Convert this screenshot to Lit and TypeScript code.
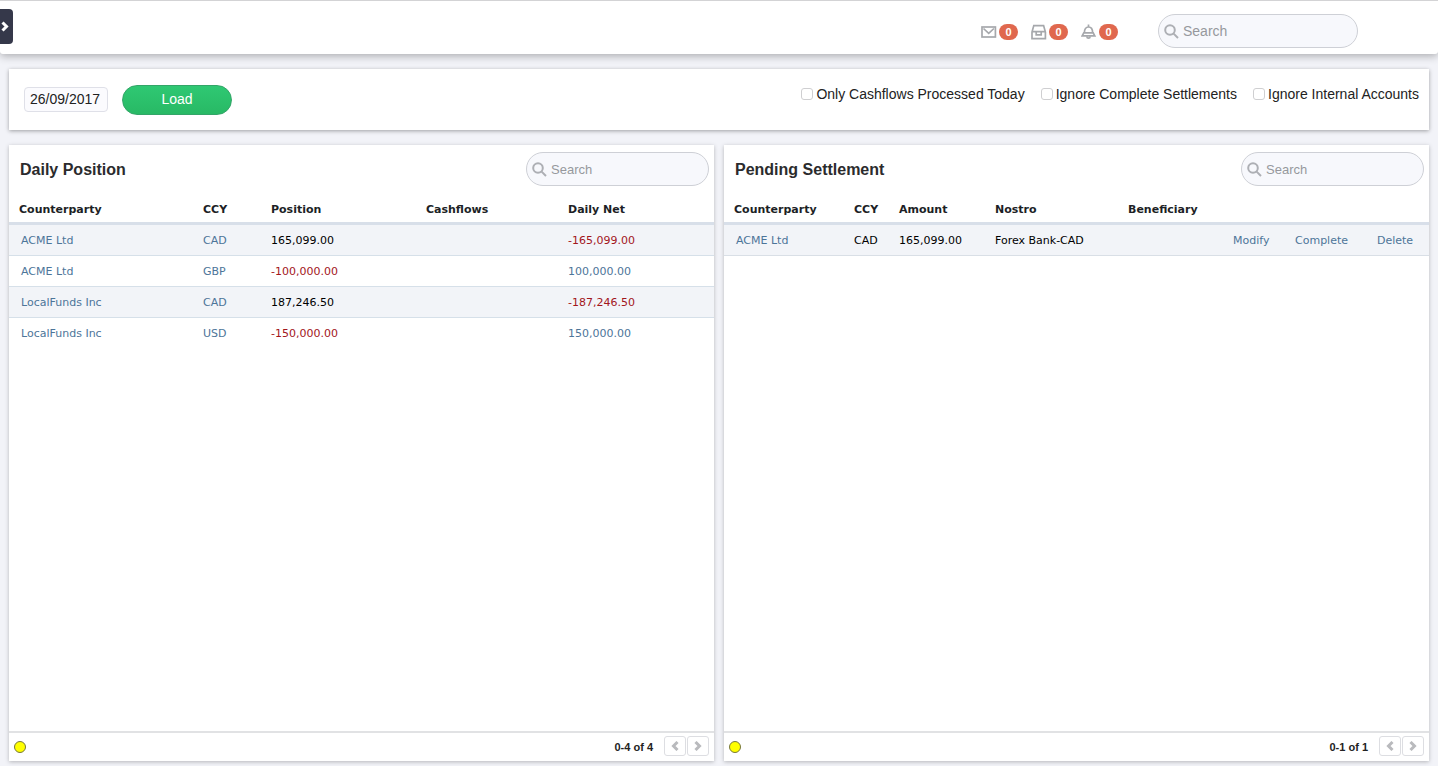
import { LitElement, html, css, svg, nothing } from "lit";
import { customElement, property } from "lit/decorators.js";
import { classMap } from "lit/directives/class-map.js";

interface Cell {
  text: string;
  link?: boolean;
  negative?: boolean;
}

interface Column {
  label: string;
  width: number;
}

const link = (text: string): Cell => ({ text, link: true });
const plain = (text: string): Cell => ({ text });
const negative = (text: string): Cell => ({ text, negative: true });

const positionColumns: Column[] = [
  { label: "Counterparty", width: 184 },
  { label: "CCY", width: 68 },
  { label: "Position", width: 155 },
  { label: "Cashflows", width: 142 },
  { label: "Daily Net", width: 156 },
];

const positionRows: Cell[][] = [
  [link("ACME Ltd"), link("CAD"), plain("165,099.00"), plain(""), negative("-165,099.00")],
  [link("ACME Ltd"), link("GBP"), negative("-100,000.00"), plain(""), link("100,000.00")],
  [link("LocalFunds Inc"), link("CAD"), plain("187,246.50"), plain(""), negative("-187,246.50")],
  [link("LocalFunds Inc"), link("USD"), negative("-150,000.00"), plain(""), link("150,000.00")],
];

const settlementColumns: Column[] = [
  { label: "Counterparty", width: 120 },
  { label: "CCY", width: 45 },
  { label: "Amount", width: 96 },
  { label: "Nostro", width: 133 },
  { label: "Beneficiary", width: 105 },
  { label: "", width: 62 },
  { label: "", width: 82 },
  { label: "", width: 62 },
];

const settlementRows: Cell[][] = [
  [
    link("ACME Ltd"),
    plain("CAD"),
    plain("165,099.00"),
    plain("Forex Bank-CAD"),
    plain(""),
    link("Modify"),
    link("Complete"),
    link("Delete"),
  ],
];

const mailIcon = svg`
  <rect x="1" y="3" width="13.4" height="10" />
  <path d="M2.5 4.5L7.7 9.4L12.9 4.5" />`;

const trayIcon = svg`
  <path d="M1 8V14.6H14.4V8L12.6 1.6H2.8L1 8Z" />
  <path d="M1 7.6H14.4M5.2 8V10.8H10.2V8" />`;

const bellIcon = svg`
  <path d="M7.5 0.6V3M3.4 8.6C3.4 5 5 3 7.5 3S11.6 5 11.6 8.6" />
  <path d="M2.8 8.8H12.2L13.8 11.9H1.2Z" />
  <path d="M5.8 12.4C6 14.8 9 14.8 9.2 12.4" />`;

@customElement("search-box")
class SearchBox extends LitElement {
  @property() label = "Search";

  static styles = css`
    :host {
      display: block;
    }
    .box {
      display: flex;
      align-items: center;
      gap: 4px;
      box-sizing: border-box;
      height: 34px;
      padding: 0 12px 0 5px;
      border: 1px solid #ced0d6;
      border-radius: 17px;
      background: #f7f8fc;
    }
    .glass {
      flex: none;
      width: 15px;
      height: 15px;
      fill: none;
      stroke: #adafb4;
      stroke-width: 2;
    }
    .field {
      flex: 1;
      min-width: 0;
      padding: 0;
      border: 0;
      outline: 0;
      background: none;
      font: inherit;
      color: #333;
    }
    .field::placeholder {
      color: #96989d;
      opacity: 1;
    }
  `;

  render() {
    return html`
      <label class="box">
        <svg class="glass" viewBox="0 0 15 15" aria-hidden="true">
          <circle cx="6" cy="6" r="4.8" />
          <path d="M9.6 9.6L14 14" />
        </svg>
        <input class="field" type="text" placeholder="Search" aria-label=${this.label} />
      </label>
    `;
  }
}

@customElement("data-panel")
class DataPanel extends LitElement {
  @property() heading = "";
  @property() range = "";
  @property({ attribute: false }) columns: Column[] = [];
  @property({ attribute: false }) rows: Cell[][] = [];

  static styles = css`
    :host {
      display: flex;
      flex-direction: column;
      min-width: 0;
      background: #fff;
      box-shadow: 0 1px 4px rgba(0, 0, 0, 0.25);
    }
    .top {
      display: flex;
      align-items: center;
      justify-content: space-between;
      padding: 7px 5px 7px 11px;
    }
    .title {
      margin: 0;
      font-size: 16px;
      line-height: 22px;
      padding-top: 2px;
      font-weight: bold;
      color: #2b2b2d;
    }
    .search {
      width: 183px;
      font-size: 13px;
    }
    .grid {
      width: 100%;
      table-layout: fixed;
      border-spacing: 0;
      font-family: "DejaVu Sans", Verdana, sans-serif;
      font-size: 11px;
      line-height: 14px;
      color: #000;
    }
    th {
      height: 24px;
      padding: 5px 0 0 10px;
      border-bottom: 3px solid #d8dfe9;
      text-align: left;
      white-space: nowrap;
      color: #1d1f26;
    }
    td {
      height: 28px;
      padding: 2px 0 0 10px;
      white-space: nowrap;
      border-bottom: 1px solid #d6e0e9;
    }
    td:first-child {
      padding-left: 12px;
    }
    .odd td {
      background: #f2f4f8;
    }
    .last td {
      border-bottom-color: #fff;
    }
    .odd.last td {
      border-bottom-color: #d9dfe6;
    }
    .negative {
      color: #a3161c;
    }
    .link {
      color: #4d7599;
      text-decoration: none;
    }
    .bottom {
      display: flex;
      align-items: center;
      margin-top: auto;
      height: 28px;
      padding: 0 5px;
      border-top: 2px solid #e1e2e4;
    }
    .status {
      box-sizing: border-box;
      width: 12px;
      height: 12px;
      border: 1px solid #77773c;
      border-radius: 50%;
      background: #ff0;
    }
    .range {
      margin-left: auto;
      padding-right: 10px;
      font-size: 11px;
      font-weight: bold;
      color: #222;
    }
    .page {
      display: flex;
      align-items: center;
      justify-content: center;
      width: 22px;
      height: 20px;
      margin: 0 0 2px 1px;
      padding: 0;
      border: 1px solid #dddee2;
      border-radius: 3px;
      background: #fff;
    }
    .chevron {
      width: 8px;
      height: 10px;
      fill: none;
      stroke: #b9babd;
      stroke-width: 3;
    }
  `;

  private renderCell(cell: Cell) {
    return html`<td class=${cell.negative ? "negative" : nothing}>
      ${cell.link ? html`<a class="link" href="#">${cell.text}</a>` : cell.text}
    </td>`;
  }

  render() {
    return html`
      <div class="top">
        <h2 class="title">${this.heading}</h2>
        <search-box class="search" label=${`Search ${this.heading}`}></search-box>
      </div>
      <table class="grid" aria-label=${this.heading}>
        <colgroup>
          ${this.columns.map((c) => html`<col style="width:${c.width}px" />`)}
        </colgroup>
        <thead>
          <tr>
            ${this.columns.map((c) => html`<th scope="col">${c.label}</th>`)}
          </tr>
        </thead>
        <tbody>
          ${this.rows.map(
            (row, i) => html`<tr
              class=${classMap({ odd: i % 2 === 0, last: i === this.rows.length - 1 })}
            >
              ${row.map((cell) => this.renderCell(cell))}
            </tr>`
          )}
        </tbody>
      </table>
      <div class="bottom">
        <span class="status"></span>
        <span class="range">${this.range}</span>
        <button class="page" type="button" aria-label="Previous page">
          <svg class="chevron" viewBox="0 0 8 10"><path d="M6.5 1L2.5 5L6.5 9" /></svg>
        </button>
        <button class="page" type="button" aria-label="Next page">
          <svg class="chevron" viewBox="0 0 8 10"><path d="M1.5 1L5.5 5L1.5 9" /></svg>
        </button>
      </div>
    `;
  }
}

@customElement("app-root")
class AppRoot extends LitElement {
  static styles = css`
    :host {
      display: flex;
      flex-direction: column;
      box-sizing: border-box;
      min-height: 100vh;
      background: #f2f3f8;
      font-family: "Liberation Sans", Arial, sans-serif;
      font-size: 14px;
      color: #222;
    }
    .header {
      display: flex;
      align-items: center;
      height: 51px;
      padding: 0 80px 2px 0;
      border-top: 1px solid #d3d3d5;
      border-radius: 0 0 3px 3px;
      background: #fff;
      box-shadow: 0 2px 8px rgba(0, 0, 0, 0.3);
    }
    .toggle {
      display: flex;
      align-items: center;
      width: 13px;
      height: 35px;
      padding: 0 0 0 1px;
      border: 0;
      border-radius: 0 4px 4px 0;
      background: #35384a;
    }
    .arrow {
      width: 8px;
      height: 11px;
      fill: none;
      stroke: #fff;
      stroke-width: 3;
    }
    .alerts {
      display: flex;
      gap: 13px;
      margin-left: auto;
      padding-top: 11px;
    }
    .alert {
      display: flex;
      align-items: center;
      gap: 2px;
      height: 16px;
      padding: 0;
      border: 0;
      background: none;
      font: inherit;
    }
    .icon {
      width: 16px;
      height: 16px;
      fill: none;
      stroke: #a6a8ac;
      stroke-width: 1.7;
    }
    .badge {
      width: 19px;
      height: 16px;
      border-radius: 8px;
      background: #e0684e;
      font-size: 11px;
      line-height: 16px;
      font-weight: bold;
      text-align: center;
      color: #fff;
    }
    .search {
      width: 200px;
      margin-left: 40px;
      padding-top: 9px;
    }
    .main {
      flex: 1;
      display: flex;
      flex-direction: column;
      gap: 15px;
      padding: 15px 9px 5px;
    }
    .toolbar {
      display: flex;
      align-items: center;
      gap: 14px;
      height: 61px;
      padding: 0 10px 0 15px;
      background: #fff;
      box-shadow: 0 1px 4px rgba(0, 0, 0, 0.35);
    }
    .date {
      box-sizing: border-box;
      width: 84px;
      height: 25px;
      padding: 0 5px 1px;
      border: 1px solid #dfe0e8;
      border-radius: 4px;
      background: #fbfbfe;
      font: inherit;
      color: #222;
    }
    .load {
      width: 110px;
      height: 30px;
      padding: 0 0 2px;
      border: 1px solid #33a568;
      border-radius: 15px;
      background: linear-gradient(#2fc873, #28b965);
      font: inherit;
      color: #fff;
    }
    .filters {
      display: flex;
      gap: 16px;
      margin-left: auto;
      padding-bottom: 12px;
    }
    .filter {
      display: flex;
      align-items: center;
      gap: 3px;
      line-height: 18px;
      white-space: nowrap;
    }
    .tick {
      appearance: none;
      width: 12px;
      height: 12px;
      margin: 0;
      border: 1px solid #cfcfd1;
      border-radius: 3px;
      background: #fff;
    }
    .tick:checked {
      background: #2fc873;
    }
    .panels {
      flex: 1;
      display: grid;
      grid-template-columns: 1fr 1fr;
      gap: 10px;
    }
  `;

  private alert(name: string, icon: unknown) {
    return html`<button class="alert" type="button" aria-label=${name}>
      <svg class="icon" viewBox="0 0 16 16" aria-hidden="true">${icon}</svg>
      <span class="badge">0</span>
    </button>`;
  }

  private filter(text: string) {
    return html`<label class="filter"><input class="tick" type="checkbox" />${text}</label>`;
  }

  render() {
    return html`
      <header class="header">
        <button class="toggle" type="button" aria-label="Open menu">
          <svg class="arrow" viewBox="0 0 8 11"><path d="M1.5 1.5L5.5 5.5L1.5 9.5" /></svg>
        </button>
        <div class="alerts">
          ${this.alert("Messages", mailIcon)} ${this.alert("Inbox", trayIcon)}
          ${this.alert("Notifications", bellIcon)}
        </div>
        <search-box class="search"></search-box>
      </header>
      <main class="main">
        <section class="toolbar">
          <input class="date" type="text" aria-label="Date" .value=${"26/09/2017"} />
          <button class="load" type="button">Load</button>
          <div class="filters">
            ${this.filter("Only Cashflows Processed Today")}
            ${this.filter("Ignore Complete Settlements")}
            ${this.filter("Ignore Internal Accounts")}
          </div>
        </section>
        <div class="panels">
          <data-panel
            heading="Daily Position"
            range="0-4 of 4"
            .columns=${positionColumns}
            .rows=${positionRows}
          ></data-panel>
          <data-panel
            heading="Pending Settlement"
            range="0-1 of 1"
            .columns=${settlementColumns}
            .rows=${settlementRows}
          ></data-panel>
        </div>
      </main>
    `;
  }
}
